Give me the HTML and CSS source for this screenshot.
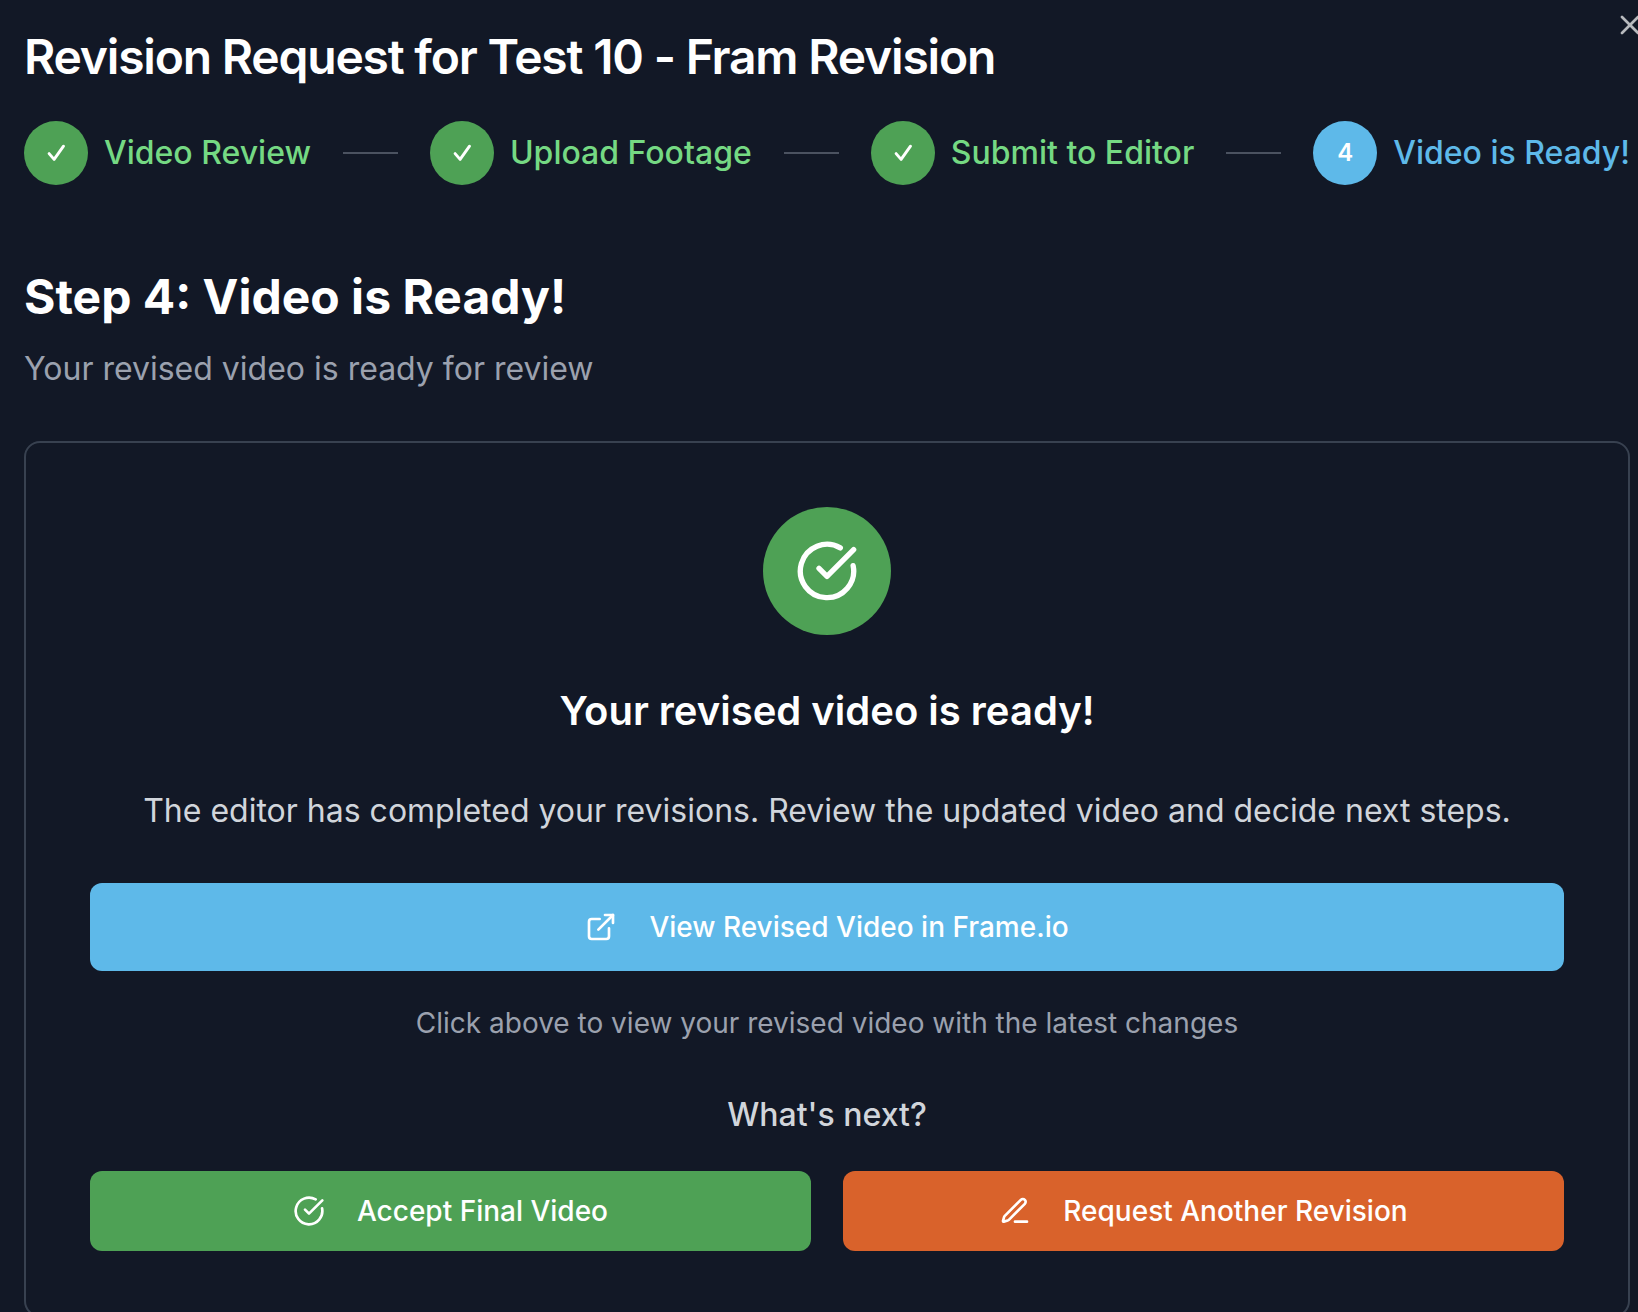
FILE: index.html
```html
<!DOCTYPE html>
<html lang="en">
<head>
<meta charset="utf-8">
<title>Revision Request</title>
<link rel="stylesheet" href="styles.css">
</head>
<body>
<main class="dialog">
  <button class="close" aria-label="Close">
    <svg class="icon" viewBox="0 0 24 24"><path d="M18 6 6 18"/><path d="m6 6 12 12"/></svg>
  </button>
  <h1 class="title">Revision Request for Test 10 - Fram Revision</h1>
  <div class="steps">
    <div class="step done"><span class="dot"><svg class="icon tick" viewBox="0 0 24 24"><path d="M5.1 12.6 10.1 18.4 19.5 5.2"/></svg></span><span class="label">Video Review</span></div>
    <span class="line"></span>
    <div class="step done"><span class="dot"><svg class="icon tick" viewBox="0 0 24 24"><path d="M5.1 12.6 10.1 18.4 19.5 5.2"/></svg></span><span class="label">Upload Footage</span></div>
    <span class="line"></span>
    <div class="step done"><span class="dot"><svg class="icon tick" viewBox="0 0 24 24"><path d="M5.1 12.6 10.1 18.4 19.5 5.2"/></svg></span><span class="label">Submit to Editor</span></div>
    <span class="line"></span>
    <div class="step current"><span class="dot">4</span><span class="label">Video is Ready!</span></div>
  </div>
  <header class="intro">
    <h2 class="heading">Step 4: Video is Ready!</h2>
    <p class="subtitle">Your revised video is ready for review</p>
  </header>
  <section class="card">
    <div class="badge">
      <svg class="icon icon-lg" viewBox="0 0 24 24"><path d="M21.801 10A10 10 0 1 1 17 3.335"/><path d="m9 11 3 3L22 4"/></svg>
    </div>
    <h3 class="card-title">Your revised video is ready!</h3>
    <p class="message">The editor has completed your revisions. Review the updated video and decide next steps.</p>
    <button class="btn view">
      <svg class="icon" viewBox="0 0 24 24"><path d="M15 3h6v6"/><path d="M10 14 21 3"/><path d="M18 13v6a2 2 0 0 1-2 2H5a2 2 0 0 1-2-2V8a2 2 0 0 1 2-2h6"/></svg>
      <span>View Revised Video in Frame.io</span>
    </button>
    <p class="hint">Click above to view your revised video with the latest changes</p>
    <p class="next">What's next?</p>
    <div class="actions">
      <button class="btn accept">
        <svg class="icon" viewBox="0 0 24 24"><path d="M21.801 10A10 10 0 1 1 17 3.335"/><path d="m9 11 3 3L22 4"/></svg>
        <span>Accept Final Video</span>
      </button>
      <button class="btn revise">
        <svg class="icon" viewBox="0 0 24 24"><path d="M12 20h9"/><path d="M16.376 3.622a1 1 0 0 1 3.002 3.002L7.368 18.635a2 2 0 0 1-.855.506l-2.872.838a.5.5 0 0 1-.62-.62l.838-2.872a2 2 0 0 1 .506-.854z"/></svg>
        <span>Request Another Revision</span>
      </button>
    </div>
  </section>
</main>
</body>
</html>
```
FILE: styles.css
```css
* { box-sizing: border-box; margin: 0; }

body {
  background: #121826;
  color: #fff;
  font-family: Inter, "Liberation Sans", sans-serif;
  font-size: 32px;
  line-height: 48px;
  height: 1312px;
  overflow: hidden;
}

.dialog {
  position: relative;
  display: flex;
  flex-direction: column;
  padding: 33px 8px 0 24px;
}

.icon {
  width: 32px;
  height: 32px;
  flex: none;
  fill: none;
  stroke: currentColor;
  stroke-width: 2;
  stroke-linecap: round;
  stroke-linejoin: round;
}

.icon-lg { width: 64px; height: 64px; }
.tick { width: 24px; height: 24px; stroke-width: 2.9; }

.close {
  position: absolute;
  top: 9px;
  left: 1614px;
  display: flex;
  padding: 0;
  border: 0;
  background: none;
  color: #fff;
  opacity: 0.7;
}

.title {
  font-size: 48px;
  line-height: 48px;
  font-weight: 600;
  letter-spacing: -1.2px;
}

.steps {
  display: flex;
  align-items: center;
  gap: 32px;
  margin-top: 40px;
}

.step { display: flex; align-items: center; gap: 16px; }

.dot {
  display: flex;
  align-items: center;
  justify-content: center;
  width: 64px;
  height: 64px;
  border-radius: 50%;
  font-size: 24px;
  line-height: 32px;
  font-weight: 600;
}

.label { font-weight: 500; white-space: nowrap; }
.done { color: #75d983; }
.current { color: #5eb9e9; }
.done .dot { background: #4ea155; color: #fff; }
.current .dot { background: #5eb9e9; color: #fff; }
.line { flex: 1; height: 2px; background: #4b5260; }

.intro { margin-top: 80px; }
.heading { font-size: 48px; line-height: 64px; font-weight: 700; }
.subtitle { margin-top: 16px; color: #9ba1ae; }

.card {
  display: flex;
  flex-direction: column;
  align-items: center;
  margin-top: 48px;
  padding: 64px;
  border: 2px solid #384150;
  border-radius: 16px;
  text-align: center;
}

.badge {
  display: flex;
  align-items: center;
  justify-content: center;
  width: 128px;
  height: 128px;
  border-radius: 50%;
  background: #4ea155;
}

.card-title {
  margin-top: 48px;
  font-size: 40px;
  line-height: 56px;
  font-weight: 600;
}

.message { margin-top: 48px; color: #d1d5db; }

.btn {
  display: flex;
  align-items: center;
  justify-content: center;
  gap: 32px;
  height: 80px;
  padding: 0 32px;
  border: 0;
  border-radius: 12px;
  color: #fff;
  font: 500 28px/40px Inter, "Liberation Sans", sans-serif;
}

.view { width: 100%; height: 88px; margin-top: 48px; background: #5eb9e9; }
.hint { margin-top: 32px; font-size: 28px; line-height: 40px; color: #9ba1ae; }
.next { margin-top: 48px; font-weight: 500; color: #d1d5db; }

.actions {
  display: grid;
  grid-template-columns: 1fr 1fr;
  gap: 32px;
  width: 100%;
  margin-top: 32px;
}

.accept { background: #4ea155; }
.revise { background: #d9622b; }
```
